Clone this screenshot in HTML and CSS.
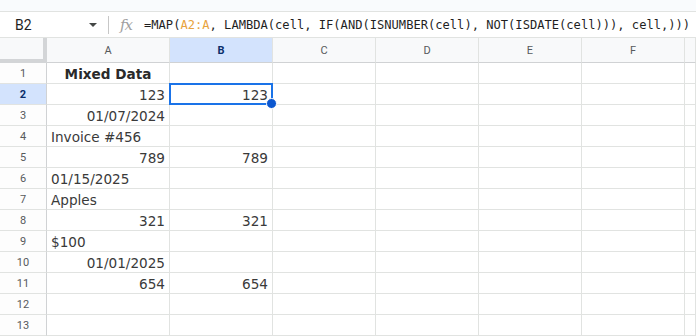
FILE: index.html
```html
<!DOCTYPE html>
<html lang="en">

<head>
    <meta charset="UTF-8">
    <meta name="viewport" content="width=device-width, initial-scale=1.0">
    <title>Mixed Data</title>
    <link rel="stylesheet" href="styles.css">
</head>

<body>
    <div class="top-strip"></div>

    <div class="formula-bar">
        <div class="name-box">
            <span class="cell-ref">B2</span>
            <span class="caret"></span>
        </div>
        <div class="divider"></div>
        <span class="fx">fx</span>
        <span class="formula">=MAP(<span class="ref">A2:A</span>, LAMBDA(cell, IF(AND(ISNUMBER(cell), NOT(ISDATE(cell))), cell,)))</span>
    </div>

    <div class="sheet">
        <!-- header row -->
        <div class="corner"></div>
        <div class="col-head">A</div>
        <div class="col-head active">B</div>
        <div class="col-head">C</div>
        <div class="col-head">D</div>
        <div class="col-head">E</div>
        <div class="col-head">F</div>
        <div class="col-head"></div>

        <div class="row-head">1</div>
        <div class="cell center bold">Mixed Data</div>
        <div class="cell"></div><div class="cell"></div><div class="cell"></div><div class="cell"></div><div class="cell"></div><div class="cell"></div>

        <div class="row-head active">2</div>
        <div class="cell right">123</div>
        <div class="cell right selected">123</div>
        <div class="cell"></div><div class="cell"></div><div class="cell"></div><div class="cell"></div><div class="cell"></div>

        <div class="row-head">3</div>
        <div class="cell right">01/07/2024</div>
        <div class="cell"></div><div class="cell"></div><div class="cell"></div><div class="cell"></div><div class="cell"></div><div class="cell"></div>

        <div class="row-head">4</div>
        <div class="cell">Invoice #456</div>
        <div class="cell"></div><div class="cell"></div><div class="cell"></div><div class="cell"></div><div class="cell"></div><div class="cell"></div>

        <div class="row-head">5</div>
        <div class="cell right">789</div>
        <div class="cell right">789</div>
        <div class="cell"></div><div class="cell"></div><div class="cell"></div><div class="cell"></div><div class="cell"></div>

        <div class="row-head">6</div>
        <div class="cell">01/15/2025</div>
        <div class="cell"></div><div class="cell"></div><div class="cell"></div><div class="cell"></div><div class="cell"></div><div class="cell"></div>

        <div class="row-head">7</div>
        <div class="cell">Apples</div>
        <div class="cell"></div><div class="cell"></div><div class="cell"></div><div class="cell"></div><div class="cell"></div><div class="cell"></div>

        <div class="row-head">8</div>
        <div class="cell right">321</div>
        <div class="cell right">321</div>
        <div class="cell"></div><div class="cell"></div><div class="cell"></div><div class="cell"></div><div class="cell"></div>

        <div class="row-head">9</div>
        <div class="cell">$100</div>
        <div class="cell"></div><div class="cell"></div><div class="cell"></div><div class="cell"></div><div class="cell"></div><div class="cell"></div>

        <div class="row-head">10</div>
        <div class="cell right">01/01/2025</div>
        <div class="cell"></div><div class="cell"></div><div class="cell"></div><div class="cell"></div><div class="cell"></div><div class="cell"></div>

        <div class="row-head">11</div>
        <div class="cell right">654</div>
        <div class="cell right">654</div>
        <div class="cell"></div><div class="cell"></div><div class="cell"></div><div class="cell"></div><div class="cell"></div>

        <div class="row-head">12</div>
        <div class="cell"></div><div class="cell"></div><div class="cell"></div><div class="cell"></div><div class="cell"></div><div class="cell"></div><div class="cell"></div>

        <div class="row-head">13</div>
        <div class="cell"></div><div class="cell"></div><div class="cell"></div><div class="cell"></div><div class="cell"></div><div class="cell"></div><div class="cell"></div>
    </div>
</body>

</html>
```

FILE: styles.css
```css
/* Spreadsheet view */
* {
    box-sizing: border-box;
}

body {
    margin: 0;
    width: 696px;
    height: 336px;
    overflow: hidden;
    background-color: #fff;
    font-family: Roboto, "Liberation Sans", sans-serif;
}

.top-strip {
    height: 12px;
    background-color: #f9fbfd;
    border-bottom: 1px solid #e1e3e1;
}

/* Formula bar */
.formula-bar {
    display: flex;
    align-items: center;
    height: 26px;
    border-bottom: 1px solid #e1e3e1;
}

.name-box {
    display: flex;
    align-items: center;
    justify-content: space-between;
    width: 100px;
    padding-left: 15px;
    padding-right: 3px;
}

.cell-ref {
    font-size: 14px;
    color: #1f1f1f;
}

.caret {
    width: 0;
    height: 0;
    border-left: 4px solid transparent;
    border-right: 4px solid transparent;
    border-top: 4px solid #444746;
}

.divider {
    width: 1px;
    height: 18px;
    margin-left: 8px;
    background-color: #c7c7c7;
}

.fx {
    margin-left: 11px;
    margin-right: 12px;
    font-family: "DejaVu Serif", serif;
    font-style: italic;
    font-size: 15px;
    color: #a0a0a0;
    letter-spacing: -1px;
}

.formula {
    font-family: "DejaVu Sans Mono", monospace;
    font-size: 12.1px;
    color: #1f1f1f;
    white-space: nowrap;
}

.formula .ref {
    color: #e8a33d;
}

/* Grid */
.sheet {
    display: grid;
    grid-template-columns: 47px 123px 103px 103px 103px 103px 103px 1fr;
    grid-template-rows: 25px repeat(13, 21px);
}

.corner {
    background-color: #f8f9fa;
    border-right: 4px solid #d3d5d7;
    border-bottom: 4px solid #d3d5d7;
}

.col-head,
.row-head {
    display: flex;
    align-items: center;
    justify-content: center;
    background-color: #f8f9fa;
    font-size: 11px;
    color: #575a5c;
    border-right: 1px solid #e1e3e1;
    border-bottom: 1px solid #d0d2d4;
}

.row-head {
    background-color: #fdfdfd;
    border-bottom: 1px solid #e1e3e1;
    border-right: 1px solid #d0d2d4;
}

.col-head.active,
.row-head.active {
    background-color: #d3e3fd;
    color: #0b2e6b;
    font-weight: bold;
}

.cell {
    display: flex;
    align-items: flex-end;
    padding: 0 4px 1px;
    font-family: "DejaVu Sans", Verdana, sans-serif;
    font-size: 13.6px;
    color: #3a3a3a;
    white-space: nowrap;
    border-right: 1px solid #e1e3e1;
    border-bottom: 1px solid #e1e3e1;
}

.cell.right {
    justify-content: flex-end;
}

.cell.center {
    justify-content: center;
}

.cell.bold {
    font-weight: bold;
    color: #2a2a2a;
}

.cell.selected {
    position: relative;
}

.cell.selected::before {
    content: "";
    position: absolute;
    left: -1px;
    top: -1px;
    right: -1px;
    bottom: -1px;
    border: 2px solid #1a73e8;
}

.cell.selected::after {
    content: "";
    position: absolute;
    right: -5px;
    bottom: -5px;
    width: 9px;
    height: 9px;
    border-radius: 50%;
    background-color: #0b57d0;
    border: 1px solid #fff;
}
```
